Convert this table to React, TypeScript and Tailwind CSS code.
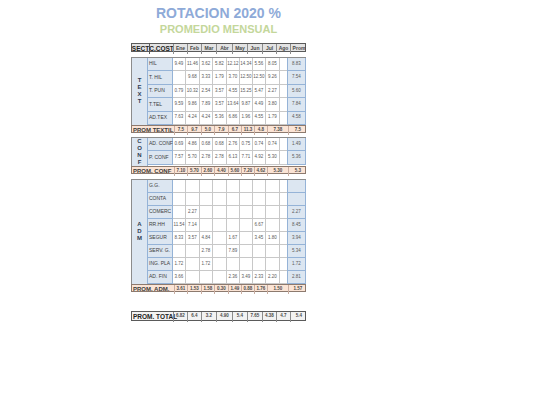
type Row = { name: string; v: string[]; p: string };

const months = ["Ene", "Feb", "Mar", "Abr", "May", "Jun", "Jul", "Ago"];

const textil: Row[] = [
  { name: "HIL", v: ["9.49", "11.46", "3.62", "5.82", "12.12", "14.34", "5.56", "8.05"], p: "8.83" },
  { name: "T. HIL", v: ["", "9.68", "3.33", "1.79", "3.70", "12.50", "12.50", "9.26"], p: "7.54" },
  { name: "T. PUN", v: ["0.79", "10.32", "2.54", "3.57", "4.55", "15.25", "5.47", "2.27"], p: "5.60" },
  { name: "T.TEL", v: ["9.59", "9.86", "7.89", "3.57", "13.64", "9.87", "4.49", "3.80"], p: "7.84" },
  { name: "AD.TEX", v: ["7.63", "4.24", "4.24", "5.36", "6.86", "1.96", "4.55", "1.79"], p: "4.58" },
];

const conf: Row[] = [
  { name: "AD. CONF", v: ["0.69", "4.86", "0.68", "0.68", "2.76", "0.75", "0.74", "0.74"], p: "1.49" },
  { name: "P. CONF", v: ["7.57", "5.70", "2.78", "2.78", "6.13", "7.71", "4.92", "5.30"], p: "5.36" },
];

const adm: Row[] = [
  { name: "G.G.", v: ["", "", "", "", "", "", "", ""], p: "" },
  { name: "CONTA", v: ["", "", "", "", "", "", "", ""], p: "" },
  { name: "COMERC", v: ["", "2.27", "", "", "", "", "", ""], p: "2.27" },
  { name: "RR.HH", v: ["11.54", "7.14", "", "", "", "", "6.67", ""], p: "8.45" },
  { name: "SEGUR", v: ["8.33", "3.57", "4.84", "", "1.67", "", "3.45", "1.80"], p: "3.94" },
  { name: "SERV. G.", v: ["", "", "2.78", "", "7.89", "", "", ""], p: "5.34" },
  { name: "ING. PLA", v: ["1.72", "", "1.72", "", "", "", "", ""], p: "1.72" },
  { name: "AD. FIN", v: ["3.66", "", "", "", "2.36", "3.49", "2.33", "2.20"], p: "2.81" },
];

const dataCols = "grid grid-cols-[25px_13px_14px_13px_14px_13px_13px_13px_14px_7px_19px]";
const promCols = "grid grid-cols-[42px_13px_14px_13px_14px_13px_13px_13px_21px_19px]";
const headCols = "grid grid-cols-[17px_24px_14px_14px_15px_16px_15px_15px_14px_14px_17px]";

function Group({ letters, rows, rowH }: { letters: string[]; rows: Row[]; rowH: string }) {
  return (
    <div className="flex border-t border-l border-[#8c8c8c]">
      <div className="w-[17px] bg-[#dce6f1] border-r border-[#95b3d7] flex flex-col items-center justify-center text-[6px] leading-[7px] font-bold text-[#2f3b52]">
        {letters.map((l, i) => (
          <span key={i}>{l}</span>
        ))}
      </div>
      <div className="flex-1 flex flex-col">
        {rows.map((r) => (
          <div key={r.name} className={`${dataCols} ${rowH}`}>
            <div className="bg-[#dce6f1] border-r border-b border-[#95b3d7] flex items-center pl-[1px] text-[5px] text-[#404040] whitespace-nowrap overflow-visible">
              {r.name}
            </div>
            {r.v.map((v, i) => (
              <div key={i} className="border-r border-b border-[#c8c8c8] flex items-center justify-center text-[4.5px] text-[#5a5a5a]">
                {v}
              </div>
            ))}
            <div className="border-b border-[#c8c8c8]" />
            <div className="bg-[#dce6f1] border-x border-b border-[#95b3d7] flex items-center justify-center text-[4.5px] text-[#5a5a5a]">
              {r.p}
            </div>
          </div>
        ))}
      </div>
    </div>
  );
}

function PromRow({ label, v, p }: { label: string; v: string[]; p: string }) {
  return (
    <div className={`${promCols} h-[8px] bg-[#fbe4d5] border border-[#8d7a6e]`}>
      <div className="flex items-center pl-[1px] text-[6px] font-bold text-[#3b3b3b] whitespace-nowrap">{label}</div>
      {v.map((x, i) => (
        <div key={i} className="border-l border-[#c9ada0] flex items-center justify-center text-[4.5px] font-bold text-[#4a4a4a]">
          {x}
        </div>
      ))}
      <div className="border-l border-[#c9ada0] flex items-center justify-center text-[4.5px] font-bold text-[#4a4a4a]">{p}</div>
    </div>
  );
}

export default function App() {
  return (
    <div className="w-[540px] h-[405px] bg-white font-['Liberation_Sans',Arial,sans-serif]">
      <div className="ml-[131px] w-[175px] pt-[5px]">
        <div className="text-center text-[14px] leading-[16px] font-bold text-[#8eaad8]">ROTACION 2020 %</div>
        <div className="text-center text-[11px] leading-[13px] font-bold text-[#c4d79b] mt-[2px]">PROMEDIO MENSUAL</div>

        <div className={`${headCols} h-[9px] mt-[7px] bg-[#e3e3e3] border border-[#5a5a5a]`}>
          <div className="flex items-center justify-center text-[6.5px] font-bold text-[#222]">SECT</div>
          <div className="border-l border-[#5a5a5a] flex items-center justify-center text-[6.5px] font-bold text-[#222]">C.COST</div>
          {[...months, "Prom"].map((m) => (
            <div key={m} className="border-l border-[#8c8c8c] flex items-center justify-center text-[5px] font-bold text-[#4a4a4a]">
              {m}
            </div>
          ))}
        </div>

        <div className="mt-[5px]">
          <Group letters={["T", "E", "X", "T"]} rows={textil} rowH="h-[13.4px]" />
          <PromRow label="PROM TEXTIL" v={["7.5", "9.7", "5.0", "7.9", "6.7", "11.3", "4.8", "7.38"]} p="7.5" />
        </div>

        <div className="mt-[4px]">
          <Group letters={["C", "O", "N", "F"]} rows={conf} rowH="h-[13.5px]" />
          <PromRow label="PROM. CONF" v={["7.10", "5.70", "2.60", "4.40", "5.60", "7.20", "4.62", "5.30"]} p="5.3" />
        </div>

        <div className="mt-[5px]">
          <Group letters={["A", "D", "M"]} rows={adm} rowH="h-[13px]" />
          <PromRow label="PROM. ADM." v={["3.61", "1.53", "1.58", "0.30", "1.49", "0.88", "1.76", "1.50"]} p="1.57" />
        </div>

        <div className={`${headCols} h-[10px] mt-[19px] bg-[#f2f2f2] border border-[#5a5a5a]`}>
          <div className="col-span-2 flex items-center pl-[1px] text-[6.5px] font-bold text-[#222] whitespace-nowrap">PROM. TOTAL</div>
          {["6.82", "6.4", "3.2", "4.90", "5.4", "7.65", "4.38", "4.7", "5.4"].map((x, i) => (
            <div key={i} className="border-l border-[#8c8c8c] flex items-center justify-center text-[4.5px] font-bold text-[#4a4a4a]">
              {x}
            </div>
          ))}
        </div>
      </div>
    </div>
  );
}
